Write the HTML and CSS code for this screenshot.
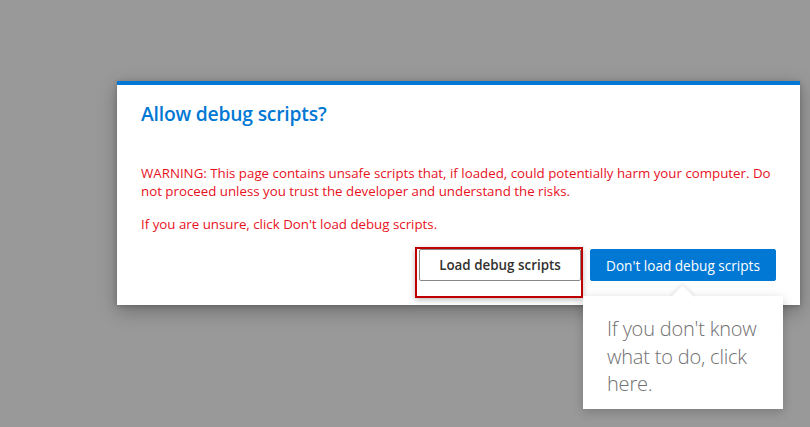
FILE: index.html
```html
<!DOCTYPE html>
<html lang="en">
<head>
<meta charset="utf-8">
<title>Allow debug scripts?</title>
<link rel="stylesheet" href="styles.css">
</head>
<body>
<div class="dialog">
  <h1 class="title">Allow debug scripts?</h1>
  <p class="warn">WARNING: This page contains unsafe scripts that, if loaded, could potentially harm your computer. Do not proceed unless you trust the developer and understand the risks.</p>
  <p class="warn unsure">If you are unsure, click Don't load debug scripts.</p>
  <div class="actions">
    <div class="load-wrap">
      <button class="btn btn-secondary">Load debug scripts</button>
      <div class="highlight"></div>
    </div>
    <div class="primary-wrap">
      <button class="btn btn-primary">Don't load debug scripts</button>
      <div class="callout">
        <div class="beak"></div>
        <p class="callout-text">If you don't know what to do, click here.</p>
      </div>
    </div>
  </div>
</div>
</body>
</html>
```
FILE: styles.css
```css
html, body {
  margin: 0;
  padding: 0;
}
body {
  background: #999999;
  width: 810px;
  height: 427px;
  overflow: hidden;
  font-family: "Open Sans", "Noto Sans", sans-serif;
  padding: 81px 0 0 117px;
  box-sizing: border-box;
}
.dialog {
  width: 683px;
  box-sizing: border-box;
  background: #fff;
  border-top: 4px solid #0078d4;
  padding: 15px 24px 24px 24px;
  box-shadow: 0 6px 18px rgba(0,0,0,0.28), 0 1px 5px rgba(0,0,0,0.2);
}
.title {
  margin: 0;
  font-size: 19.3px;
  line-height: 28px;
  font-weight: 600;
  color: #0078d4;
  letter-spacing: -0.2px;
}
.warn {
  margin: 36px 0 0 0;
  font-size: 13.3px;
  line-height: 18px;
  color: #e81123;
  letter-spacing: 0;
}
.unsure {
  margin-top: 15px;
}
.actions {
  display: flex;
  justify-content: flex-end;
  gap: 9px;
  margin-top: 16px;
}
.btn {
  height: 32px;
  box-sizing: border-box;
  font-family: "Open Sans", "Noto Sans", sans-serif;
  font-size: 13.4px;
  font-weight: 600;
  border-radius: 2px;
  padding: 0;
  letter-spacing: 0;
}
.btn-secondary {
  width: 162px;
  background: #fff;
  color: #323130;
  border: 1px solid #8a8886;
}
.btn-primary {
  width: 186px;
  background: #0078d4;
  color: #fff;
  border: 1px solid #0078d4;
  font-weight: 400;
  font-size: 13.6px;
}
.load-wrap, .primary-wrap {
  position: relative;
}
.highlight {
  position: absolute;
  left: -4px;
  top: -2px;
  width: 168px;
  height: 51px;
  box-sizing: border-box;
  border: 2px solid #c00000;
  box-shadow: 0 2px 6px rgba(0,0,0,0.25);
}
.callout {
  position: absolute;
  left: -7px;
  top: 47px;
  width: 200px;
  height: 113px;
  box-sizing: border-box;
  background: #fff;
  padding: 19px 16px 0 24px;
  box-shadow: 0 3px 10px rgba(0,0,0,0.2);
}
.beak {
  position: absolute;
  left: 91px;
  top: -7px;
  width: 17px;
  height: 17px;
  background: #fff;
  transform: rotate(45deg);
  box-shadow: -2px -2px 4px rgba(0,0,0,0.08);
}
.callout-text {
  position: relative;
  margin: 0;
  font-size: 20px;
  font-weight: 300;
  line-height: 27.5px;
  color: #707070;
  letter-spacing: -0.2px;
}
```
